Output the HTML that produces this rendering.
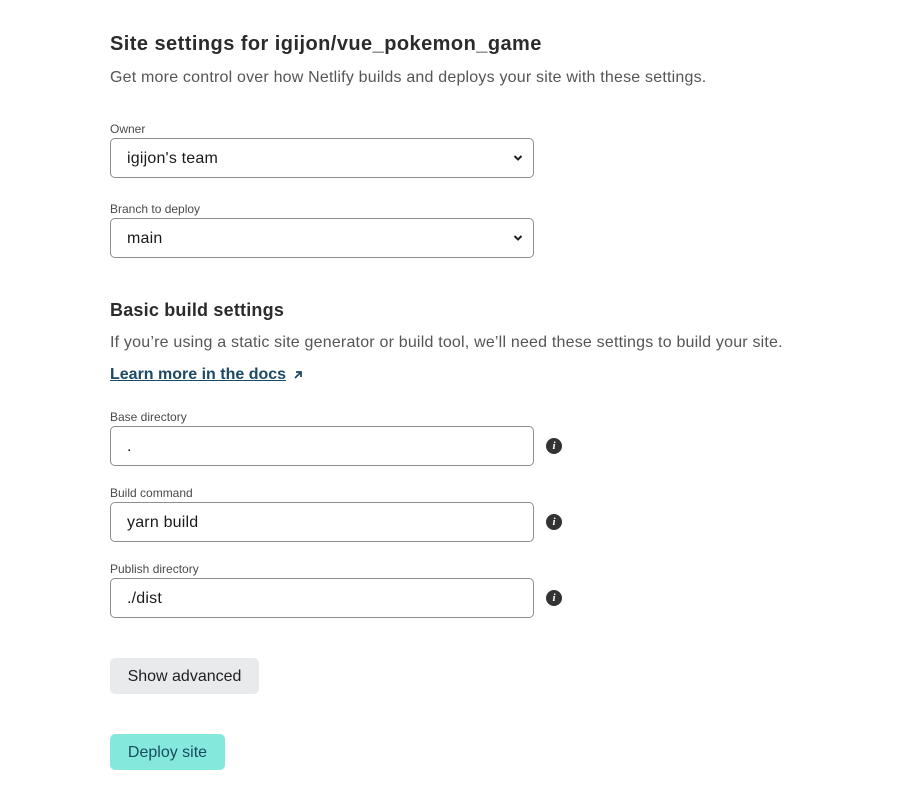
<!DOCTYPE html>
<html><head><meta charset="utf-8"><style>
body{margin:0;width:914px;height:797px;background:#fff;font-family:"Liberation Sans",sans-serif;color:#2d2d2d;position:relative;overflow:hidden}
.a{position:absolute;white-space:nowrap}
.lbl{font-size:12px;color:#4a4a4a}
.box{position:absolute;left:110px;width:422px;height:38px;border:1px solid #8e8e8e;border-radius:5px;font-size:16px;line-height:40px;box-sizing:content-box;letter-spacing:0.2px}
.box span{position:absolute;left:16px;color:#1a1a1a}
.chev{position:absolute;right:10px;top:15px}
.info{position:absolute;left:546px;width:16px;height:16px;border-radius:50%;background:#333;color:#fff;font:bold italic 11px/16px "Liberation Serif",serif;text-align:center}
</style></head><body>
<div class="a" style="left:110px;top:33px;font-size:20px;font-weight:bold;color:#2b2b2b;letter-spacing:0.45px">Site settings for igijon/vue_pokemon_game</div>
<div class="a" style="left:110px;top:69px;font-size:16px;color:#555;letter-spacing:0.2px">Get more control over how Netlify builds and deploys your site with these settings.</div>
<div class="a lbl" style="left:110px;top:122px">Owner</div>
<div class="box" style="top:138px"><span>igijon's team</span><svg class="chev" width="10" height="8" viewBox="0 0 10 8"><path d="M1.5 2l3.5 3.5 3.5-3.5" stroke="#222" stroke-width="2" fill="none"/></svg></div>
<div class="a lbl" style="left:110px;top:202px">Branch to deploy</div>
<div class="box" style="top:218px"><span>main</span><svg class="chev" width="10" height="8" viewBox="0 0 10 8"><path d="M1.5 2l3.5 3.5 3.5-3.5" stroke="#222" stroke-width="2" fill="none"/></svg></div>
<div class="a" style="left:110px;top:300px;font-size:18px;font-weight:bold;color:#2b2b2b;letter-spacing:0.2px">Basic build settings</div>
<div class="a" style="left:110px;top:334px;font-size:16px;color:#555;letter-spacing:0.2px">If you’re using a static site generator or build tool, we’ll need these settings to build your site.</div>
<div class="a" style="left:110px;top:366px;font-size:16px;font-weight:bold;color:#1c4a64;text-decoration:underline">Learn more in the docs</div>
<svg class="a" style="left:292px;top:369px" width="12" height="12" viewBox="0 0 12 12"><path d="M3 9L9 3M4 3h5v5" stroke="#1c4a64" stroke-width="1.8" fill="none"/></svg>
<div class="a lbl" style="left:110px;top:410px">Base directory</div>
<div class="box" style="top:426px"><span>.</span></div>
<div class="info" style="top:438px">i</div>
<div class="a lbl" style="left:110px;top:486px">Build command</div>
<div class="box" style="top:502px"><span>yarn build</span></div>
<div class="info" style="top:514px">i</div>
<div class="a lbl" style="left:110px;top:562px">Publish directory</div>
<div class="box" style="top:578px"><span>./dist</span></div>
<div class="info" style="top:590px">i</div>
<div class="a" style="left:110px;top:658px;width:149px;height:36px;background:#e9eaec;border-radius:5px;font-size:16px;line-height:38px;text-align:center;color:#1f1f1f">Show advanced</div>
<div class="a" style="left:110px;top:734px;width:115px;height:36px;background:#84e8dc;border-radius:5px;font-size:16px;line-height:38px;text-align:center;color:#1b4c5e">Deploy site</div>
</body></html>
